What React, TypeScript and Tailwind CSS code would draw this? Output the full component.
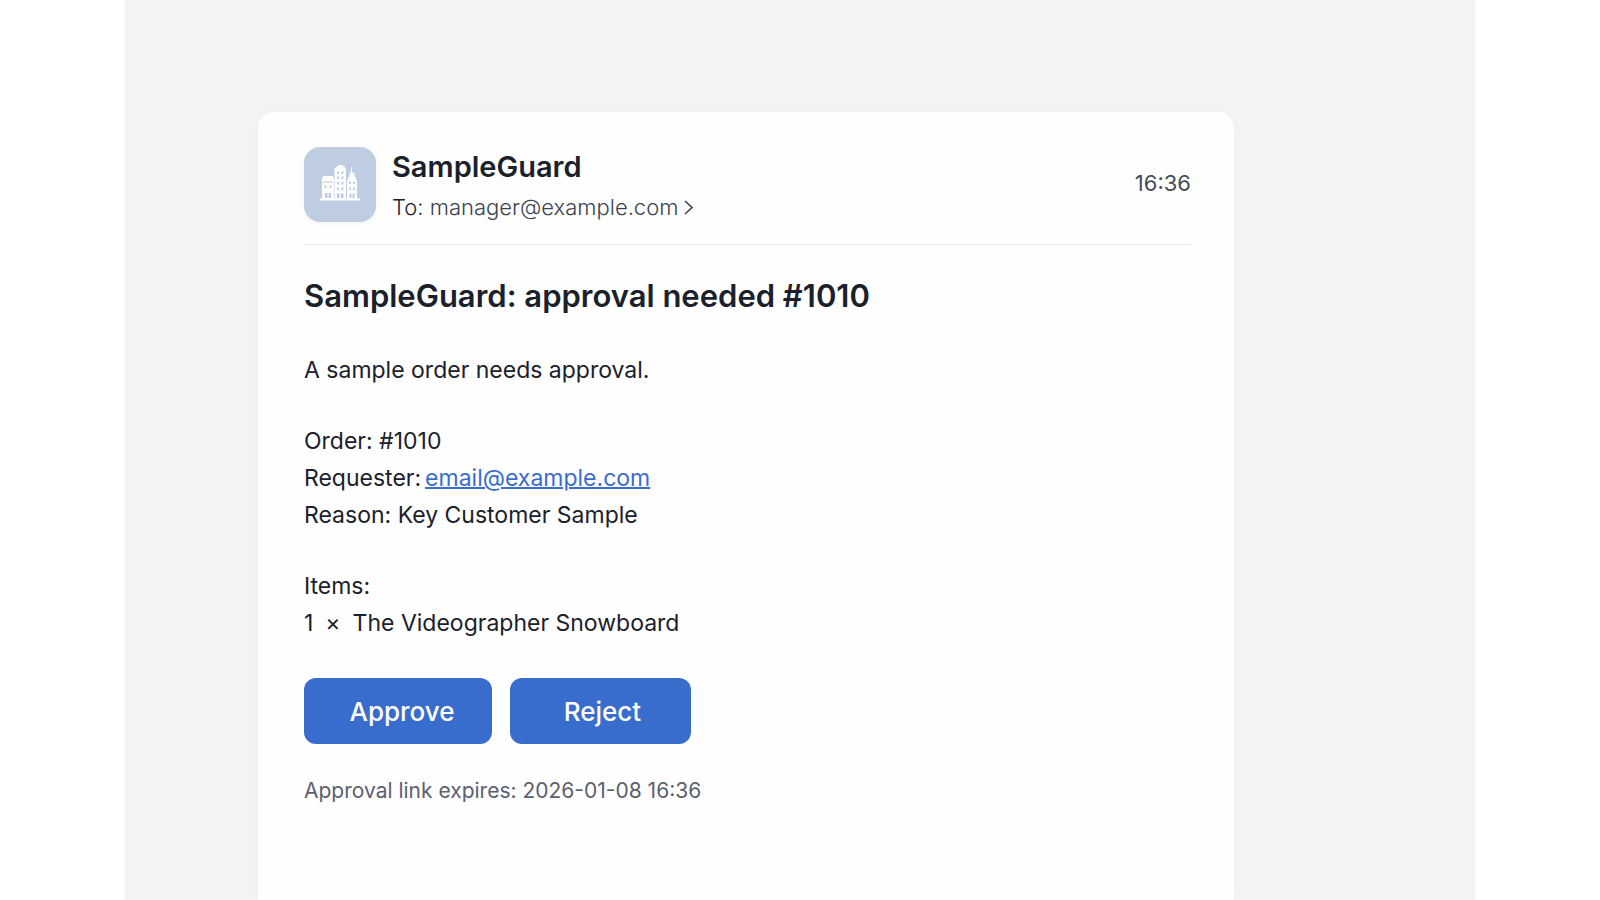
function BuildingsIcon() {
  return (
    <svg viewBox="0 0 40 36" className="h-9 w-10" aria-hidden="true">
      <g fill="#fdfdfe">
        <path d="M2 12.500h1V11h10v1.500h1v22H2z" />
        <path d="M14.500 3H16V1.500h2V0h5v1.500h2V3h1v31.500H14.500z" />
        <path d="M27 15h1v-3h1.500V8.500L31 7V2.500h1V7l2.500 1.500V12H36v3h1v19.500H27z" />
        <path d="M0 33.500h40V35.500H0z" />
      </g>
      <g fill="#bfcde3">
        <path d="M3 16.500h10v1H3zM4.500 20.500h2v2.500h-2zM9.500 20.500h2v2.500h-2zM5 28h2.500v5H5zM8.500 28H11v5H8.500z" />
        <path d="M17 6.500h2V9h-2zM21.500 6.500h2V9h-2zM17 11.500h2V14h-2zM21.500 11.500h2V14h-2zM17 17h2v2.500h-2zM21.500 17h2v2.500h-2zM17 22.500h2V25h-2zM21.500 22.500h2V25h-2zM17 28.500h2.500v4.500H17zM21 28.500h2.500v4.500H21z" />
        <path d="M29 16.500h2V19h-2zM33 16.500h2V19h-2zM29 22.500h2V25h-2zM33 22.500h2V25h-2zM29.500 28.500h2v4.500h-2zM32.500 28.500h2v4.500h-2z" />
      </g>
    </svg>
  );
}

function ChevronIcon() {
  return (
    <svg viewBox="0 0 10 16" className="h-4 w-[10px]" fill="none" stroke="#3b424f" strokeWidth="1.600" aria-hidden="true">
      <path d="M1 2l7 6.500L1 15" />
    </svg>
  );
}

export default function App() {
  return (
    <div className="flex min-h-screen justify-center bg-white font-['Inter',sans-serif] text-[#1b212b]">
      <main className="flex w-full max-w-[1350px] bg-[#f3f3f4] pt-28 pr-[241px] pl-[133px]">
        <article className="grow rounded-t-2xl bg-[#fefefe] pt-[35px] pr-[43px] pb-10 pl-[46px] shadow-[0_0_12px_rgba(30,40,60,0.02)]">
          <header className="flex items-center border-b border-[#e8e9ec] pb-[22px]">
            <div className="flex h-[75px] w-[72px] shrink-0 items-center justify-center rounded-2xl bg-[#bfcde3] pb-1 shadow-[0_2px_6px_rgba(30,40,60,0.04)]">
              <BuildingsIcon />
            </div>
            <div className="ml-4 flex grow flex-col gap-[5px]">
              <p className="text-[29px] leading-[40px] font-semibold">SampleGuard</p>
              <button type="button" className="flex items-center gap-1.5 text-[22px] leading-[30px] font-light">
                <span>
                  To: <span className="text-[#3b424f]">manager@example.com</span>
                </span>
                <ChevronIcon />
              </button>
            </div>
            <time className="pb-1 text-[22px] leading-[30px] text-[#454c58]">16:36</time>
          </header>

          <h1 className="mt-[31px] text-[31px] leading-[40px] font-semibold">
            SampleGuard: approval needed #1010
          </h1>

          <div className="mt-9 flex flex-col gap-[34px] text-[23px] leading-[37px]">
            <p>A sample order needs approval.</p>
            <div>
              <p>Order: #1010</p>
              <p className="flex gap-1">
                Requester:
                <a href="mailto:email@example.com" className="text-[#3a6dcd] underline decoration-2">
                  email@example.com
                </a>
              </p>
              <p>Reason: Key Customer Sample</p>
            </div>
            <div>
              <p>Items:</p>
              <p className="flex gap-3">
                <span>1</span>
                <span>×</span>
                <span>The Videographer Snowboard</span>
              </p>
            </div>
          </div>

          <div className="mt-9 flex gap-[18px]">
            <button type="button" className="h-[66px] w-[188px] rounded-xl bg-[#386dcd] pl-2 text-[26px] font-medium text-white">
              Approve
            </button>
            <button type="button" className="h-[66px] w-[181px] rounded-xl bg-[#386dcd] pl-1 text-[26px] font-medium text-white">
              Reject
            </button>
          </div>

          <p className="mt-8 text-[21px] leading-[30px] text-[#5b616d]">
            Approval link expires: 2026-01-08 16:36
          </p>
        </article>
      </main>
    </div>
  );
}
